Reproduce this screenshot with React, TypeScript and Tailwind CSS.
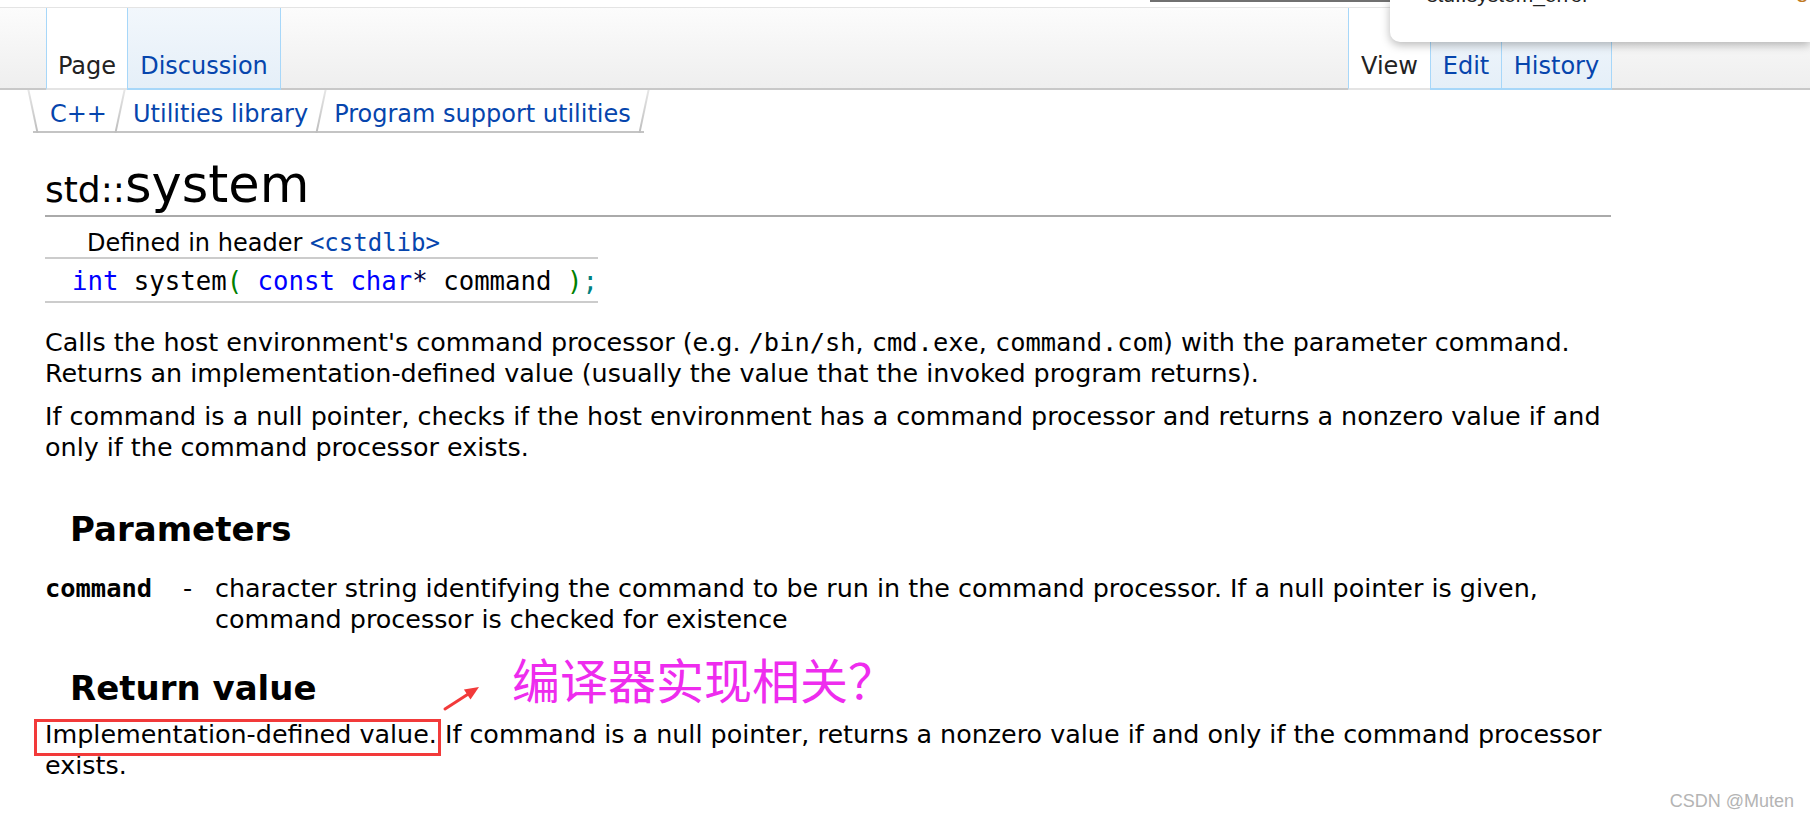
const link = 'text-[#0645ad]';

function Tab({ label, active, width, right }: { label: string; active?: boolean; width: string; right?: boolean }) {
  return (
    <div
      className={`${width} flex h-[82px] items-end justify-center border-l border-[#a7d7f9] pb-[8px] text-[24px] leading-[28px] ${right ? 'border-r' : ''} ${
        active
          ? 'border-b-2 border-b-[#e4e4e4] bg-white text-[#222]'
          : `border-b-2 border-b-[#a7d7f9] bg-linear-to-b from-[#f2f7fc] to-[#e5eff8] ${link}`
      }`}
    >
      {label}
    </div>
  );
}

function Sep({ back }: { back?: boolean }) {
  return <div className={`-mx-px h-full w-[2px] bg-linear-to-b from-[#e6e6e6] to-[#bdbdbd] ${back ? 'skew-x-12' : '-skew-x-12'}`} />;
}

function Crumb({ label, pl }: { label: string; pl: string }) {
  return (
    <div className={`flex h-full items-start border-b-2 border-[#c4c4c4] pt-[10px] ${pl} pr-[13px] text-[24px] leading-[28px] ${link}`}>{label}</div>
  );
}

const mono = "font-['DejaVu_Sans_Mono',monospace]";

export default function App() {
  return (
    <div className="relative h-[818px] w-[1810px] overflow-hidden bg-white font-['DejaVu_Sans',sans-serif] text-black">
      {/* top strip */}
      <div className="h-[7px] bg-white" />
      <div className="h-px bg-[#e4e4e4]" />

      {/* page tabs */}
      <div className="flex h-[82px] bg-linear-to-b from-[#fcfcfc] to-[#eeeeee]">
        <div className="w-[46px] border-b-2 border-[#c8c8c8]" />
        <Tab label="Page" active width="w-[81px]" />
        <Tab label="Discussion" width="w-[154px]" right />
        <div className="flex-1 border-b-2 border-[#c8c8c8]" />
        <Tab label="View" active width="w-[82px]" />
        <Tab label="Edit" width="w-[71px]" />
        <Tab label="History" width="w-[111px]" right />
        <div className="w-[198px] border-b-2 border-[#c8c8c8]" />
      </div>

      {/* breadcrumbs */}
      <div className="flex h-[43px] pl-[33px]">
        <Sep back />
        <Crumb label="C++" pl="pl-[17px]" />
        <Sep />
        <Crumb label="Utilities library" pl="pl-[13px]" />
        <Sep />
        <Crumb label="Program support utilities" pl="pl-[13px]" />
        <Sep />
      </div>

      <div className="w-[1611px] pl-[45px]">
        <h1 className="mt-[22px] h-[60px] whitespace-nowrap text-[51px] leading-[60px] font-normal">
          <span className="text-[36px]">std::</span>system
        </h1>
        <div className="h-[2px] bg-[#aaaaaa]" />

        {/* declaration */}
        <div className="mt-[10px] w-[553px]">
          <div className="border-b-2 border-[#cccccc] pl-[42px] pt-[2px] text-[24px] leading-[28px]">
            Defined in header <span className={`${mono} ${link}`}>&lt;cstdlib&gt;</span>
          </div>
          <div className={`${mono} whitespace-pre border-b-2 border-[#cccccc] pb-[2px] pl-[27px] pt-[4px] text-[25.7px] leading-[36px]`}>
            <span className="text-[#0000ff]">int</span> system<span className="text-[#008000]">(</span>{' '}
            <span className="text-[#0000ff]">const</span> <span className="text-[#0000ff]">char</span>
            <span className="text-[#000040]">*</span> command <span className="text-[#008000]">)</span>
            <span className="text-[#008080]">;</span>
          </div>
        </div>

        <p className="mt-[24px] text-[25.4px] leading-[31px]">
          Calls the host environment's command processor (e.g. <span className={mono}>/bin/sh</span>,{' '}
          <span className={mono}>cmd.exe</span>, <span className={mono}>command.com</span>) with the parameter command.
          Returns an implementation-defined value (usually the value that the invoked program returns).
        </p>
        <p className="mt-[12px] text-[25.4px] leading-[31px]">
          If command is a null pointer, checks if the host environment has a command processor and returns a nonzero value
          if and only if the command processor exists.
        </p>

        <h3 className="mt-[46px] pl-[25px] text-[34px] font-bold leading-[40px]">Parameters</h3>
        <div className="mt-[24px] flex text-[25.4px] leading-[31px]">
          <div className={`${mono} w-[128px] shrink-0 font-bold`}>command</div>
          <div className="w-[42px] shrink-0 pl-[10px]">-</div>
          <div className="flex-1">
            character string identifying the command to be run in the command processor. If a null pointer is given, command
            processor is checked for existence
          </div>
        </div>

        <h3 className="mt-[33px] pl-[25px] text-[34px] font-bold leading-[40px]">Return value</h3>
        <p className="mt-[11px] text-[25.4px] leading-[31px]">
          Implementation-defined value. If command is a null pointer, returns a nonzero value if and only if the command
          processor exists.
        </p>
      </div>

      {/* annotations over the page */}
      <div className="absolute left-[34px] top-[719px] h-[37px] w-[407px] border-[3px] border-[#f23a3a]" />
      <svg className="absolute left-[440px] top-[680px]" width="45" height="35" viewBox="0 0 45 35">
        <line x1="5" y1="29" x2="27.5" y2="14.5" stroke="#f23a3a" strokeWidth="3" strokeLinecap="round" />
        <polygon points="39,7 30.5,19.6 23.9,9.6" fill="#f23a3a" />
      </svg>
      <div className="absolute left-[512px] top-[654px] font-['Noto_Sans_CJK_SC',sans-serif] text-[48px] leading-[48px] text-[#ee2cee]">
        编译器实现相关？
      </div>
      <div className="absolute bottom-[7px] right-[16px] font-['Liberation_Sans',sans-serif] text-[18px] leading-[20px] text-[#b4b4b4]">
        CSDN @Muten
      </div>

      {/* browser overlay at the top */}
      <div className="absolute left-[1150px] top-0 h-[2px] w-[240px] bg-[#707070]" />
      <div className="absolute left-[1390px] right-0 top-0 h-[42px] overflow-hidden rounded-bl-[10px] bg-white shadow-[0_3px_10px_rgba(0,0,0,0.28)]">
        <div className="-mt-[17px] flex justify-between pl-[37px] pr-[2px] font-['Liberation_Sans',sans-serif] text-[21px] leading-[24px] text-[#222]">
          <span>std::system_error</span>
          <span className="text-[#c07a20]">8</span>
        </div>
      </div>
    </div>
  );
}
